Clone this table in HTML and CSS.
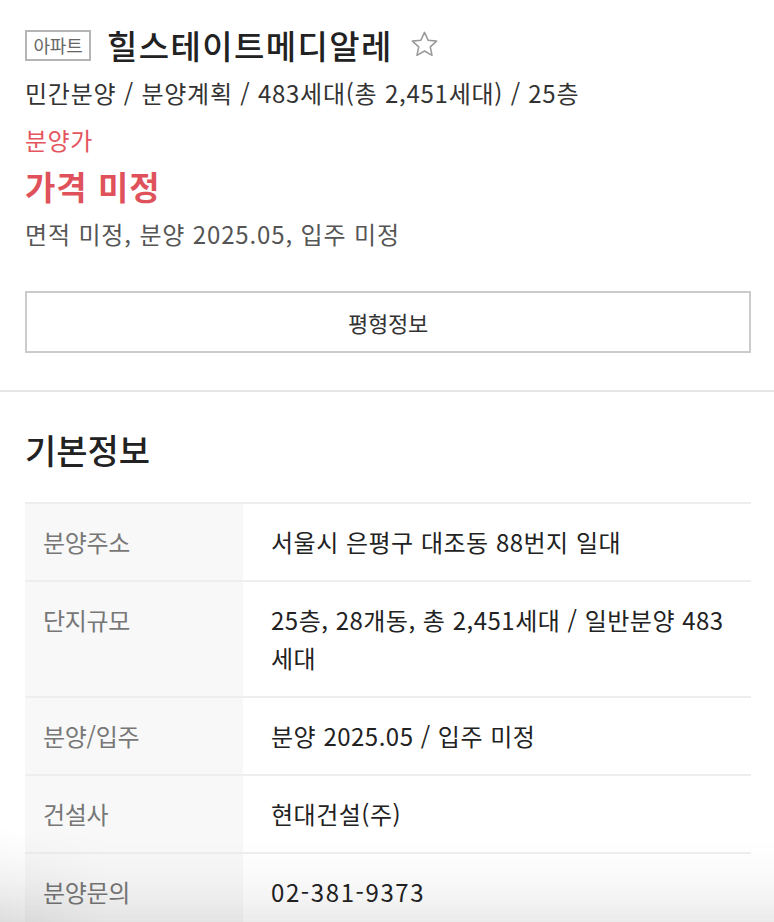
FILE: index.html
```html
<!DOCTYPE html>
<html lang="ko">
<head>
<meta charset="utf-8">
<link rel="stylesheet" href="styles.css">
</head>
<body>
<section class="summary">
  <div class="title-row">
    <span class="badge">아파트</span>
    <h1 class="title">힐스테이트메디알레</h1>
    <svg class="star" width="31" height="31" viewBox="0 0 24 24"><path d="M12 2.6l2.78 6.06 6.62.72-4.94 4.47 1.37 6.52L12 17.05l-5.83 3.32 1.37-6.52L2.6 9.38l6.62-.72z" fill="none" stroke="#9a9a9a" stroke-width="1.2" stroke-linejoin="round"/></svg>
  </div>
  <p class="meta">민간분양 / 분양계획 / 483세대(총 2,451세대) / 25층</p>
  <p class="price-label">분양가</p>
  <p class="price">가격 미정</p>
  <p class="sub">면적 미정, 분양 2025.05, 입주 미정</p>
  <button class="plan-btn">평형정보</button>
</section>
<section class="basic">
  <h2 class="heading">기본정보</h2>
  <dl class="info">
    <div class="row"><dt>분양주소</dt><dd>서울시 은평구 대조동 88번지 일대</dd></div>
    <div class="row"><dt>단지규모</dt><dd>25층, 28개동, 총 2,451세대 / 일반분양 483<wbr><span class="nw">세대</span></dd></div>
    <div class="row"><dt>분양/입주</dt><dd>분양 2025.05 / 입주 미정</dd></div>
    <div class="row"><dt>건설사</dt><dd>현대건설(주)</dd></div>
    <div class="row"><dt>분양문의</dt><dd class="phone">02-381-9373</dd></div>
  </dl>
</section>
<div class="fade"></div>
</body>
</html>
```

FILE: styles.css
```css
* { box-sizing: border-box; }
html, body { margin: 0; padding: 0; background: #fff; }
body {
  font-family: "Noto Sans CJK KR", "Noto Sans", sans-serif;
  color: #222;
  overflow: hidden;
  height: 922px;
}
p, h1, h2, dl, dt, dd { margin: 0; }

.summary {
  padding: 21px 23px 37px 25px;
  border-bottom: 2px solid #e6e6e6;
}
.title-row {
  display: flex;
  align-items: center;
  height: 48px;
}
.badge {
  display: inline-flex;
  align-items: center;
  justify-content: center;
  width: 66px;
  height: 31px;
  border: 2px solid #b5b5b5;
  color: #666;
  font-size: 18px;
  letter-spacing: -0.2px;
}
.title {
  font-size: 33px;
  font-weight: 500;
  letter-spacing: 1.4px;
  margin-left: 16px;
  color: #222;
}
.star { margin-left: 16px; margin-top: -2px; }

.meta, .price-label, .sub {
  line-height: 47px;
  font-size: 24px;
  letter-spacing: 0.75px;
}
.meta { color: #333; }
.price-label { color: #e4555e; letter-spacing: 0.5px; }
.price {
  line-height: 47px;
  color: #e0525b;
  font-size: 33px;
  font-weight: 700;
  letter-spacing: 1px;
}
.sub { color: #555; letter-spacing: 0.85px; }

.plan-btn {
  display: block;
  width: 100%;
  margin-top: 34px;
  height: 62px;
  background: #fff;
  border: 2px solid #cbcbcb;
  font-family: inherit;
  font-size: 22px;
  color: #333;
  letter-spacing: -0.3px;
  cursor: pointer;
}

.basic { padding: 36px 23px 0 25px; }
.heading {
  font-size: 34px;
  font-weight: 500;
  line-height: 44px;
  color: #222;
  margin-bottom: 30px;
}
.info { border-bottom: 2px solid #eee; }
.row {
  display: grid;
  grid-template-columns: 218px 1fr;
  border-top: 2px solid #eee;
}
.row dt {
  background: #f8f8f8;
  padding: 19px 0 19px 18px;
  font-size: 24px;
  line-height: 38px;
  color: #777;
  letter-spacing: -0.3px;
}
.row dd {
  padding: 19px 0 19px 28px;
  font-size: 24px;
  line-height: 38px;
  color: #222;
  letter-spacing: 0.5px;
}
.row dd.phone { letter-spacing: 1.6px; }
.nw { white-space: nowrap; }

.fade {
  position: fixed;
  left: 0;
  right: 0;
  bottom: 0;
  height: 95px;
  pointer-events: none;
  background:
    linear-gradient(to right, rgba(0,0,0,0.06), rgba(0,0,0,0) 14%),
    linear-gradient(to bottom, rgba(0,0,0,0), rgba(0,0,0,0.08));
  -webkit-mask-image: linear-gradient(to bottom, transparent, #000);
}
```
